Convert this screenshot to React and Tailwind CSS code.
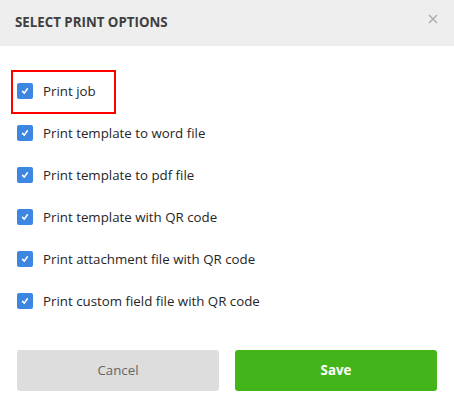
const options = [
  "Print job",
  "Print template to word file",
  "Print template to pdf file",
  "Print template with QR code",
  "Print attachment file with QR code",
  "Print custom field file with QR code",
];

function CheckBox() {
  return (
    <span className="flex h-4 w-4 shrink-0 items-center justify-center rounded-[2px] bg-[#3d87e2]">
      <svg width="10" height="10" viewBox="0 0 10 10" fill="none">
        <path d="M2.6 5.4 L4.3 7.1 L7.4 2.8" stroke="#fff" strokeWidth="1.6" strokeLinecap="round" strokeLinejoin="round" />
      </svg>
    </span>
  );
}

export default function App() {
  return (
    <div className="h-[417px] w-[454px] bg-white font-['Open_Sans',sans-serif]">
      {/* Header */}
      <div className="relative flex h-[46px] items-center bg-[#eeeeee] px-[15px]">
        <h2 className="text-[13.3px] font-bold text-[#3f3f3f]">SELECT PRINT OPTIONS</h2>
        <button className="absolute left-[428px] top-[14px] p-0">
          <svg width="10" height="10" viewBox="0 0 10 10">
            <path d="M1 1 L9 9 M9 1 L1 9" stroke="#a9a9a9" strokeWidth="1.3" />
          </svg>
        </button>
      </div>

      {/* Options */}
      <div className="flex flex-col px-[17px] pt-6">
        {options.map((label, i) => (
          <div key={label} className="relative flex h-[42px] items-center gap-[10px]">
            {i === 0 && (
              <div className="absolute left-[-6px] top-0 h-[44px] w-[105px] border-2 border-[#ff0000]" />
            )}
            <CheckBox />
            <span className="pt-[2px] text-[13.3px] text-[#262626]">{label}</span>
          </div>
        ))}
      </div>

      {/* Buttons */}
      <div className="mt-[28px] flex gap-4 px-[17px]">
        <button className="h-[41px] flex-1 rounded-[3px] bg-[#dddddd] text-[13.3px] text-[#666666]">Cancel</button>
        <button className="h-[41px] flex-1 rounded-[3px] bg-[#43b51a] text-[13.3px] font-bold text-white">Save</button>
      </div>
    </div>
  );
}
